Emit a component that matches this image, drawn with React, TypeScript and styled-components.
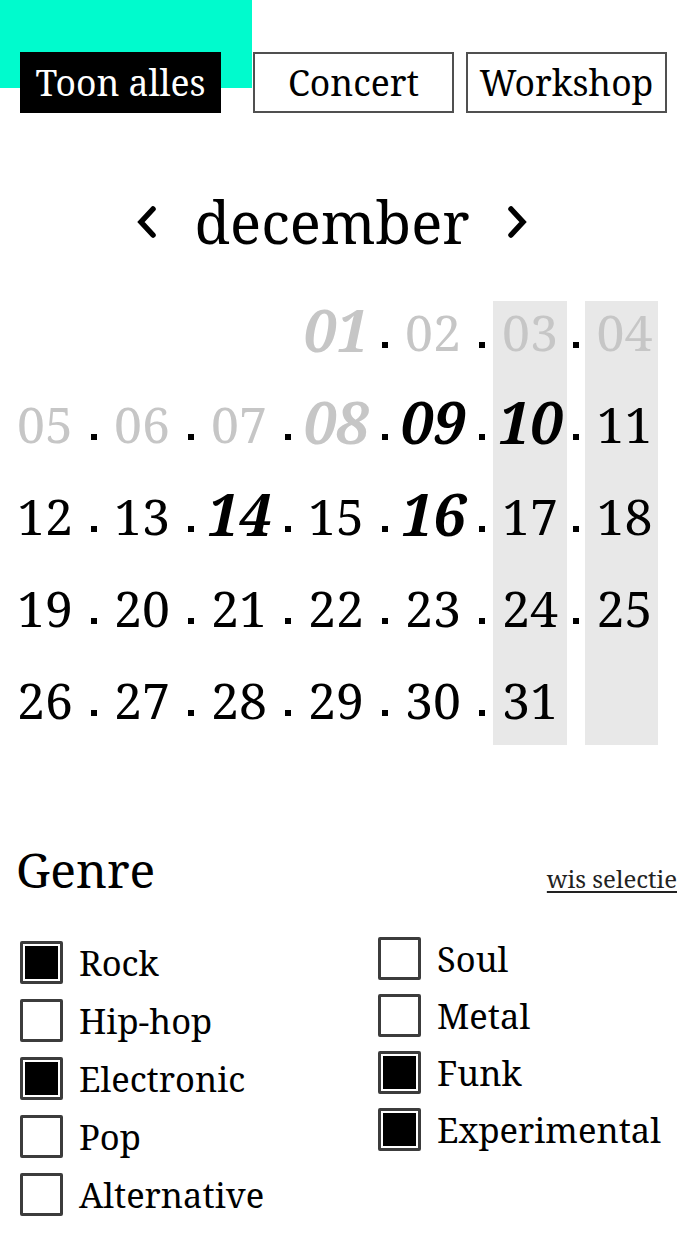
import React from "react";
import styled, { createGlobalStyle } from "styled-components";

const GlobalStyle = createGlobalStyle`
  html, body { margin: 0; padding: 0; background: #fff; }
  body { font-family: "Noto Serif", "DejaVu Serif", serif; color: #000; }
  * { box-sizing: border-box; }
`;

const Page = styled.div`
  width: 700px;
  min-height: 1244px;
  background: #fff;
`;

const Header = styled.header`
  display: flex;
  align-items: flex-start;
  padding: 52px 0 0 20px;
  background: linear-gradient(#00fbcd, #00fbcd) no-repeat 0 0 / 252px 88px;
`;

const FilterButton = styled.button<{ $active?: boolean }>`
  width: 201px;
  height: 61px;
  margin-right: ${(p) => (p.$active ? "32px" : "12px")};
  border: 2px solid ${(p) => (p.$active ? "#000" : "#505050")};
  background: ${(p) => (p.$active ? "#000" : "#fff")};
  color: ${(p) => (p.$active ? "#fff" : "#000")};
  font-family: inherit;
  font-size: 35.5px;
  line-height: 1;
  padding: 0;
  cursor: pointer;
`;

const MonthNav = styled.div`
  display: flex;
  align-items: center;
  justify-content: center;
  gap: 37px;
  margin-top: 69px;
  padding-right: 36px;
  height: 80px;
`;

const MonthName = styled.h2`
  margin: 0;
  font-weight: 400;
  font-size: 58px;
  line-height: 1;
`;

const ArrowButton = styled.button`
  border: 0;
  background: none;
  padding: 0;
  display: flex;
  cursor: pointer;
`;

const CalendarGrid = styled.div`
  display: grid;
  grid-template-columns: 74px 23px 74px 23px 74px 23px 74px 23px 74px 23px 74px 18px 73px;
  grid-template-rows: repeat(5, 92px);
  margin: 39px 0 0 8px;
`;

const WeekendShade = styled.div<{ $col: number }>`
  grid-column: ${(p) => p.$col};
  grid-row: 1 / -1;
  background: #e8e8e8;
  margin-bottom: 16px;
`;

const DayCell = styled.div<{ $past?: boolean; $last?: boolean }>`
  font-size: 50px;
  line-height: 63px;
  text-align: center;
  padding-left: ${(p) => (p.$last ? "6px" : "0")};
  color: ${(p) => (p.$past ? "#c6c6c6" : "#000")};
  position: relative;
  z-index: 1;
`;

const Highlight = styled.span`
  font-size: 58px;
  font-weight: 700;
  font-style: italic;
  line-height: 1;
`;

const Separator = styled.div`
  line-height: 63px;
  font-size: 50px;
  text-align: center;
  position: relative;
  z-index: 1;
`;

const Dot = styled.span`
  display: inline-block;
  width: 6px;
  height: 6px;
  background: #000;
  vertical-align: 3px;
`;

const GenreSection = styled.section`
  padding: 80px 23px 0 16px;
`;

const GenreHeader = styled.div`
  display: flex;
  justify-content: space-between;
  align-items: baseline;
`;

const GenreTitle = styled.h3`
  margin: 0;
  font-weight: 400;
  font-size: 48px;
  line-height: 1.2;
`;

const ClearLink = styled.a`
  font-size: 24px;
  color: #222;
  text-decoration: underline;
  text-underline-offset: 3px;
  cursor: pointer;
`;

const OptionColumns = styled.div`
  display: grid;
  grid-template-columns: 358px 1fr;
  align-items: start;
  margin-top: 42px;
  padding-left: 4px;
`;

const OptionList = styled.div<{ $offset?: number; $gap?: number }>`
  display: flex;
  flex-direction: column;
  gap: ${(p) => p.$gap ?? 15}px;
  margin-top: ${(p) => p.$offset ?? 0}px;
`;

const Option = styled.label`
  display: flex;
  align-items: center;
  gap: 16px;
  height: 43px;
  font-size: 34.5px;
  cursor: pointer;
`;

const Box = styled.span<{ $checked?: boolean }>`
  width: 43px;
  height: 43px;
  flex: none;
  border: 3px solid #3c3c3c;
  border-radius: 2px;
  padding: 2px;
  background: ${(p) => (p.$checked ? "#000" : "#fff")};
  background-clip: content-box;
`;

const Chevron = ({ dir }: { dir: "left" | "right" }) => (
  <svg width="22" height="34" viewBox="0 0 22 34">
    <path
      d={dir === "left" ? "M17 4 L5 17 L17 30" : "M5 4 L17 17 L5 30"}
      fill="none"
      stroke="#000"
      strokeWidth="5.5"
      strokeLinecap="round"
      strokeLinejoin="miter"
    />
  </svg>
);

type Day = { n: number; past?: boolean; hl?: boolean };

const highlighted = new Set([1, 8, 9, 10, 14, 16]);
const days: Day[] = Array.from({ length: 31 }, (_, i) => ({
  n: i + 1,
  past: i + 1 <= 8,
  hl: highlighted.has(i + 1),
}));

const START = 3; // December 1st falls in the 4th column

const leftGenres = [
  { name: "Rock", checked: true },
  { name: "Hip-hop", checked: false },
  { name: "Electronic", checked: true },
  { name: "Pop", checked: false },
  { name: "Alternative", checked: false },
];
const rightGenres = [
  { name: "Soul", checked: false },
  { name: "Metal", checked: false },
  { name: "Funk", checked: true },
  { name: "Experimental", checked: true },
];

export default function App() {
  const cells: React.ReactNode[] = [];
  days.forEach((d, i) => {
    const pos = i + START;
    const row = Math.floor(pos / 7) + 1;
    const col = pos % 7;
    const label = String(d.n).padStart(2, "0");
    cells.push(
      <DayCell
        key={`d${d.n}`}
        $past={d.past}
        $last={col === 6}
        style={{ gridRow: row, gridColumn: col * 2 + 1 }}
      >
        {d.hl ? <Highlight>{label}</Highlight> : label}
      </DayCell>
    );
    if (col < 6 && d.n < 31) {
      cells.push(
        <Separator key={`s${d.n}`} style={{ gridRow: row, gridColumn: col * 2 + 2 }}>
          <Dot />
        </Separator>
      );
    }
  });

  return (
    <Page>
      <GlobalStyle />
      <Header>
        <FilterButton $active>Toon alles</FilterButton>
        <FilterButton>Concert</FilterButton>
        <FilterButton>Workshop</FilterButton>
      </Header>

      <MonthNav>
        <ArrowButton aria-label="vorige maand">
          <Chevron dir="left" />
        </ArrowButton>
        <MonthName>december</MonthName>
        <ArrowButton aria-label="volgende maand">
          <Chevron dir="right" />
        </ArrowButton>
      </MonthNav>

      <CalendarGrid>
        <WeekendShade $col={11} />
        <WeekendShade $col={13} />
        {cells}
      </CalendarGrid>

      <GenreSection>
        <GenreHeader>
          <GenreTitle>Genre</GenreTitle>
          <ClearLink>wis selectie</ClearLink>
        </GenreHeader>
        <OptionColumns>
          <OptionList>
            {leftGenres.map((g) => (
              <Option key={g.name}>
                <Box $checked={g.checked} />
                {g.name}
              </Option>
            ))}
          </OptionList>
          <OptionList $offset={-4} $gap={14}>
            {rightGenres.map((g) => (
              <Option key={g.name}>
                <Box $checked={g.checked} />
                {g.name}
              </Option>
            ))}
          </OptionList>
        </OptionColumns>
      </GenreSection>
    </Page>
  );
}
